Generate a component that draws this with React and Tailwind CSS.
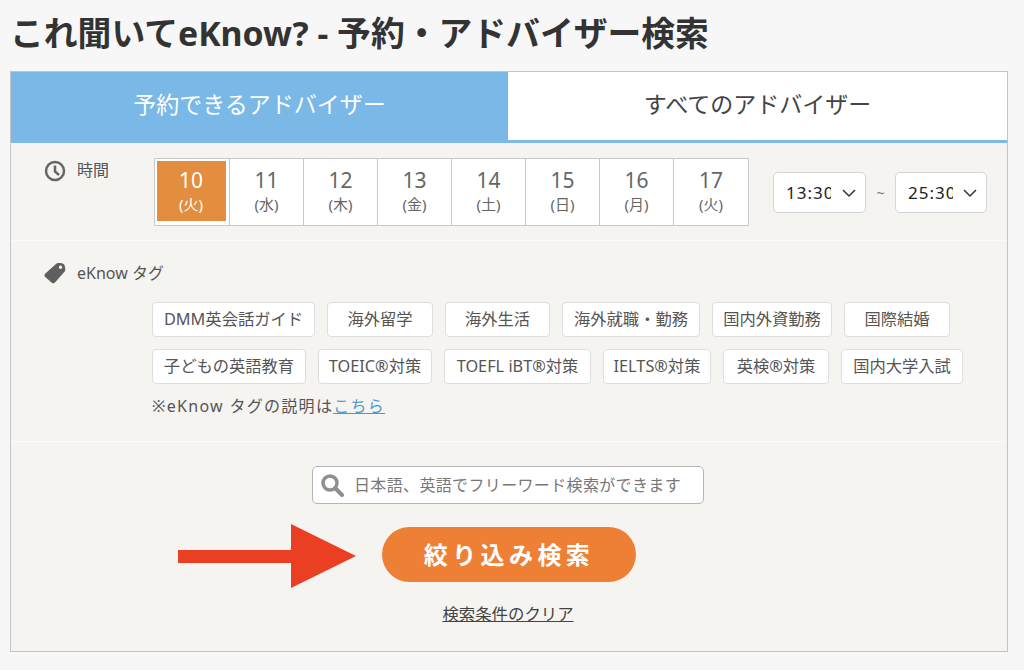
const DAYS = [
  { num: 10, day: '火', width: 'w-[74px]', active: true },
  { num: 11, day: '水', width: 'w-[74px]' },
  { num: 12, day: '木', width: 'w-[74px]' },
  { num: 13, day: '金', width: 'w-[74px]' },
  { num: 14, day: '土', width: 'w-[74px]' },
  { num: 15, day: '日', width: 'w-[74px]' },
  { num: 16, day: '月', width: 'w-[74px]' },
  { num: 17, day: '火', width: 'w-[75px]' },
];

const TAG_ROWS = [
  [
    { label: 'DMM英会話ガイド', width: 'w-[163px]' },
    { label: '海外留学', width: 'w-[106px]' },
    { label: '海外生活', width: 'w-[105px]' },
    { label: '海外就職・勤務', width: 'w-[138px]' },
    { label: '国内外資勤務', width: 'w-[120px]' },
    { label: '国際結婚', width: 'w-[106px]' },
  ],
  [
    { label: '子どもの英語教育', width: 'w-[154px]' },
    { label: 'TOEIC®対策', width: 'w-[114px]' },
    { label: 'TOEFL iBT®対策', width: 'w-[147px]' },
    { label: 'IELTS®対策', width: 'w-[108px]' },
    { label: '英検®対策', width: 'w-[106px]' },
    { label: '国内大学入試', width: 'w-[122px]' },
  ],
];

function TimeSelect({ value, width }) {
  return (
    <div className={`${width} h-[41px] bg-white border border-[#d5d5d5] rounded-[5px] flex items-center justify-between pl-[12px] pr-[7px]`}>
      <span className="w-[45px] overflow-hidden whitespace-nowrap text-[17px] tracking-[1px] text-[#222]">{value}</span>
      <svg width="18" height="18" viewBox="0 0 18 18" fill="none" stroke="#333" strokeWidth="1.5">
        <path d="M3 6l6 6 6-6" />
      </svg>
    </div>
  );
}

export default function App() {
  return (
    <div className="relative min-h-screen h-[670px] overflow-hidden bg-[#f7f7f7] text-[#555] font-['Noto_Sans','Noto_Sans_CJK_JP',sans-serif]">
      <h1 className="h-[71px] pl-[10px] pt-[11px] text-[33.8px] leading-[44px] font-bold text-[#333] whitespace-nowrap">
        これ聞いてeKnow? - 予約・アドバイザー検索
      </h1>

      <div className="mx-[10px] w-[998px] h-[581px] border border-[#c4c4c4] bg-[#f6f4f1] flex flex-col">
        <div className="flex h-[71px] border-b-[3px] border-[#7db9e8] shrink-0">
          <div className="w-[497px] pb-[4px] bg-[#7ab8e8] text-white text-[23px] flex items-center justify-center">予約できるアドバイザー</div>
          <div className="flex-1 pb-[4px] bg-white text-[#444] text-[23px] flex items-center justify-center">すべてのアドバイザー</div>
        </div>

        <div className="h-[98px] border-b border-[#fbfafa] shrink-0 flex pt-[15px] pl-[33px]">
          <div className="w-[110px] flex items-start gap-[11px] h-[26px] pt-[1px]">
            <svg width="22" height="22" viewBox="0 0 22 22" fill="none" stroke="#666" strokeWidth="2.5" className="mt-[1px]">
              <circle cx="11" cy="11" r="9" />
              <path d="M11 5.5V11.5L15 15" />
            </svg>
            <span className="text-[16px] leading-[22px]">時間</span>
          </div>
          <div className="flex h-[68px] border border-[#c9c9c9] bg-white">
            {DAYS.map((d, i) => (
              <div key={d.num} className={`${d.width} ${i > 0 ? 'border-l border-[#c9c9c9]' : ''} flex items-center justify-center`}>
                <div className={`${d.active ? 'w-[69px] h-[60px] -ml-[2px] -mt-[2px] pt-[2px] bg-[#e38d3f] text-white' : 'w-full h-full text-[#666]'} flex flex-col items-center justify-center`}>
                  <span className="text-[21px] leading-[24px] -mt-[3px]">{d.num}</span>
                  <span className="text-[15px] leading-[20px] mt-[2px]">({d.day})</span>
                </div>
              </div>
            ))}
          </div>
          <div className="ml-[24px] mt-[14px] flex items-center h-[41px]">
            <TimeSelect value="13:30" width="w-[93px]" />
            <span className="w-[29px] text-center text-[14px] text-[#777]">~</span>
            <TimeSelect value="25:30" width="w-[92px]" />
          </div>
        </div>

        <div className="h-[201px] border-b border-[#fbfafa] shrink-0 pt-[19px] pl-[33px]">
          <div className="flex items-center gap-[11px] h-[26px]">
            <svg width="23" height="23" viewBox="0 0 23 23" fill="#5f5f5f" className="-ml-[1px]">
              <path fillRule="evenodd" d="M13.5 1.5C15 .8 19 1 20.5 2s2.2 5 1.6 7L12 20.5c-1 1-2.2 1-3.2.2l-6.5-5.8c-1-1-1-2.2-.2-3.2zM17.5 3.5a1.7 1.7 0 100 3.4 1.7 1.7 0 000-3.4z" />
            </svg>
            <span className="text-[16px]">eKnow タグ</span>
          </div>
          <div className="pl-[108px] mt-[16px] flex flex-col gap-[12px]">
            {TAG_ROWS.map((row, i) => (
              <div key={i} className="flex gap-[12px]">
                {row.map(tag => (
                  <div key={tag.label} className={`${tag.width} h-[35px] pb-[1px] bg-white border border-[#dedede] rounded-[4px] flex items-center justify-center text-[16.3px] text-[#555] whitespace-nowrap`}>
                    {tag.label}
                  </div>
                ))}
              </div>
            ))}
            <p className="text-[16px] tracking-[1.3px] leading-[22px] -mt-[1px]">
              ※eKnow タグの説明は<a href="#" className="text-[#4a9ad4] underline">こちら</a>
            </p>
          </div>
        </div>

        <div className="flex-1 flex flex-col items-center">
          <div className="mt-[24px] ml-[-2px] w-[392px] h-[38px] bg-white border border-[#b5b5b5] rounded-[5px] flex items-center pl-[7px] gap-[10px]">
            <svg width="24" height="24" viewBox="0 0 24 24" fill="none" stroke="#8f8f8f" className="shrink-0">
              <circle cx="10" cy="10" r="7" strokeWidth="3.5" />
              <path d="M15.5 15.5L22 22" strokeWidth="4" strokeLinecap="round" />
            </svg>
            <span className="text-[16px] tracking-[0.35px] text-[#777] whitespace-nowrap">日本語、英語でフリーワード検索ができます</span>
          </div>
          <button className="mt-[23px] w-[254px] h-[55px] pt-[1px] rounded-full bg-[#ee8035] text-white text-[24px] font-bold tracking-[4.4px] flex items-center justify-center">
            絞り込み検索
          </button>
          <a href="#" className="mt-[20px] -ml-[2px] text-[16.4px] text-[#444] underline">検索条件のクリア</a>
        </div>
      </div>

      <svg className="absolute left-[178px] top-[524px]" width="178" height="64" viewBox="0 0 178 64">
        <path d="M0 26H113V0L178 32L113 64V39H0z" fill="#ea3f22" />
      </svg>
    </div>
  );
}
